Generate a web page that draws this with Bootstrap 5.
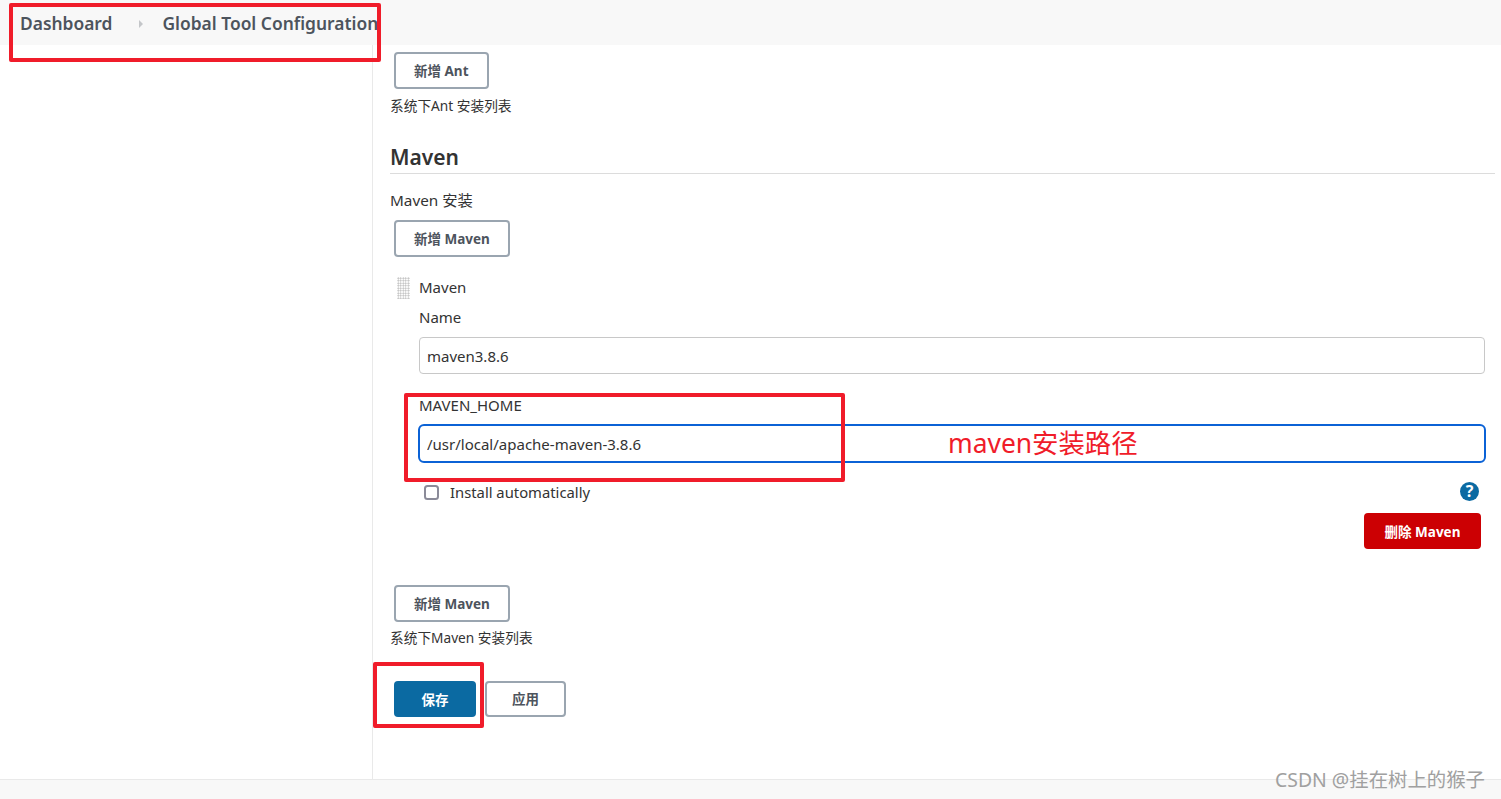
<!DOCTYPE html>
<html lang="zh">
<head>
<meta charset="utf-8">
<title>Global Tool Configuration</title>
<link href="https://cdn.jsdelivr.net/npm/bootstrap@5.3.0/dist/css/bootstrap.min.css" rel="stylesheet">
<style>
html,body{height:100%;}
body{font-family:"Noto Sans","Noto Sans CJK SC",sans-serif;font-size:14px;color:#333;background:#fff;overflow:hidden;position:relative;}
.shell{height:799px;}
.crumbbar{height:45px;background:#f8f8f8;padding:2px 0 0 20px;font-size:17.4px;font-weight:600;color:#4d545d;flex:none;}
.crumbbar .sep{width:0;height:0;border-left:4px solid #c4c6c9;border-top:4px solid transparent;border-bottom:4px solid transparent;margin:0 19px 0 27px;}
.crumbname{white-space:nowrap;width:216px;overflow:hidden;}
.bodyrow{flex:1;min-height:0;}
.sidepane{width:373px;flex:none;border-right:1px solid #e9e9e9;}
.mainpane{flex:1;padding:7px 6px 0 17px;min-width:0;}
.jbtn{font-size:13.5px;font-weight:700;height:37px;padding:2px 18px 0;border:2px solid #9aa5b0;border-radius:4px;color:#4d545d;background:#fff;display:inline-flex;align-items:center;line-height:1;}
.jbtn:hover{border-color:#9aa5b0;color:#4d545d;background:#fff;}
.addslot{margin-left:4px;}
.hintline{font-size:13.7px;line-height:18px;color:#333;}
.secttitle{font-size:21px;font-weight:600;line-height:29px;color:#333;border-bottom:1px solid #dcdcdc;margin:28px 0 0;padding-bottom:1px;height:31px;}
.fieldlabel{font-size:15px;line-height:20px;color:#333;}
.grip{width:13px;height:22px;margin-left:7px;margin-right:1px;background-image:radial-gradient(#b8b8b8 0.8px,transparent 0.9px);background-size:2.5px 2.5px;flex:none;}
.jinput{height:37px;font-size:15px;color:#333;padding:0 7px;border:1px solid #c8c8c8;border-radius:4px;}
.jinput.active-field{height:39px;width:calc(100% + 2px);margin-left:-1px;border:2px solid #0b62d6;padding:0 7px;border-radius:6px;box-shadow:none;}
.jinput:focus{box-shadow:none;}
.jcheck{width:15px;height:15px;margin:0;border:2px solid #8b8b99;border-radius:3px;flex:none;}
.helpdot{width:19px;height:19px;border-radius:50%;background:#0b6aa2;color:#fff;font-size:16px;font-weight:700;line-height:19px;text-align:center;margin-top:-2px;}
.delbtn{font-size:13.5px;font-weight:700;height:36px;width:117px;padding:2px 0 0;background:#cc0003;border:0;border-radius:4px;color:#fff;}
.savebtn{font-size:13.5px;font-weight:700;height:36px;width:82px;padding:2px 0 0;background:#0b6aa2;border:0;border-radius:4px;color:#fff;}
.applybtn{height:36px;width:81px;padding:2px 0 0;justify-content:center;}
.footbar{height:20px;background:#f8f8f8;border-top:1px solid #e9e9e9;flex:none;}
.redframe{position:absolute;border:4px solid #f01c2a;border-radius:2px;pointer-events:none;}
.fr1{left:9px;top:3px;width:372px;height:59px;}
.fr2{left:404px;top:393px;width:441px;height:89px;}
.fr3{left:373px;top:662px;width:111px;height:66px;}
.redcaption{position:absolute;left:948px;top:426px;font-size:26.4px;line-height:34px;color:#f01c2a;white-space:nowrap;}
.wmark{position:absolute;left:1275px;top:768px;font-size:19.4px;line-height:24px;color:#a0a0a0;white-space:nowrap;}
.maven-label{font-size:15.3px;}
.add1{margin-top:10px;}
.itemhead{margin-top:20px;gap:8px;}
.itembody{margin-right:10px;}
.name-label{margin-top:10px;}
.name-input{margin-top:10px;}
.home-label{margin-top:21px;}
.home-input{margin-top:9px;}
.check-row{margin:19px 6px 0 5px;}
.check-text{margin-left:11px;font-size:14.8px;}
.del-row{margin-top:11px;padding-right:4px;}
.add2{margin-top:36px;}
.hint2{margin-top:7px;}
.actions{margin-top:34px;gap:9px;}
</style>
</head>
<body>
<div class="shell d-flex flex-column">
  <div class="crumbbar d-flex align-items-center">
    <span>Dashboard</span><span class="sep"></span><span class="crumbname">Global Tool Configuration</span>
  </div>
  <div class="bodyrow d-flex">
    <div class="sidepane"></div>
    <div class="mainpane">
      <div class="addslot"><button type="button" class="btn jbtn">新增 Ant</button></div>
      <div class="hintline mt-2">系统下Ant 安装列表</div>
      <div class="secttitle">Maven</div>
      <div class="fieldlabel maven-label mt-3">Maven 安装</div>
      <div class="addslot add1"><button type="button" class="btn jbtn">新增 Maven</button></div>
      <div class="d-flex align-items-start itemhead">
        <div class="grip"></div>
        <div class="flex-grow-1 itembody">
          <div class="fieldlabel">Maven</div>
          <div class="fieldlabel name-label">Name</div>
          <input class="form-control jinput name-input" value="maven3.8.6">
          <div class="fieldlabel home-label">MAVEN_HOME</div>
          <input class="form-control jinput active-field home-input" value="/usr/local/apache-maven-3.8.6">
          <div class="d-flex align-items-center check-row">
            <input class="form-check-input jcheck" type="checkbox">
            <span class="fieldlabel check-text flex-grow-1">Install automatically</span>
            <span class="helpdot">?</span>
          </div>
          <div class="text-end del-row"><button type="button" class="btn delbtn">删除 Maven</button></div>
        </div>
      </div>
      <div class="addslot add2"><button type="button" class="btn jbtn">新增 Maven</button></div>
      <div class="hintline hint2">系统下Maven 安装列表</div>
      <div class="d-flex addslot actions">
        <button type="button" class="btn savebtn">保存</button>
        <button type="button" class="btn jbtn applybtn">应用</button>
      </div>
    </div>
  </div>
  <div class="footbar"></div>
</div>
<div class="redframe fr1"></div>
<div class="redframe fr2"></div>
<div class="redframe fr3"></div>
<div class="redcaption">maven安装路径</div>
<div class="wmark">CSDN @挂在树上的猴子</div>
</body>
</html>
